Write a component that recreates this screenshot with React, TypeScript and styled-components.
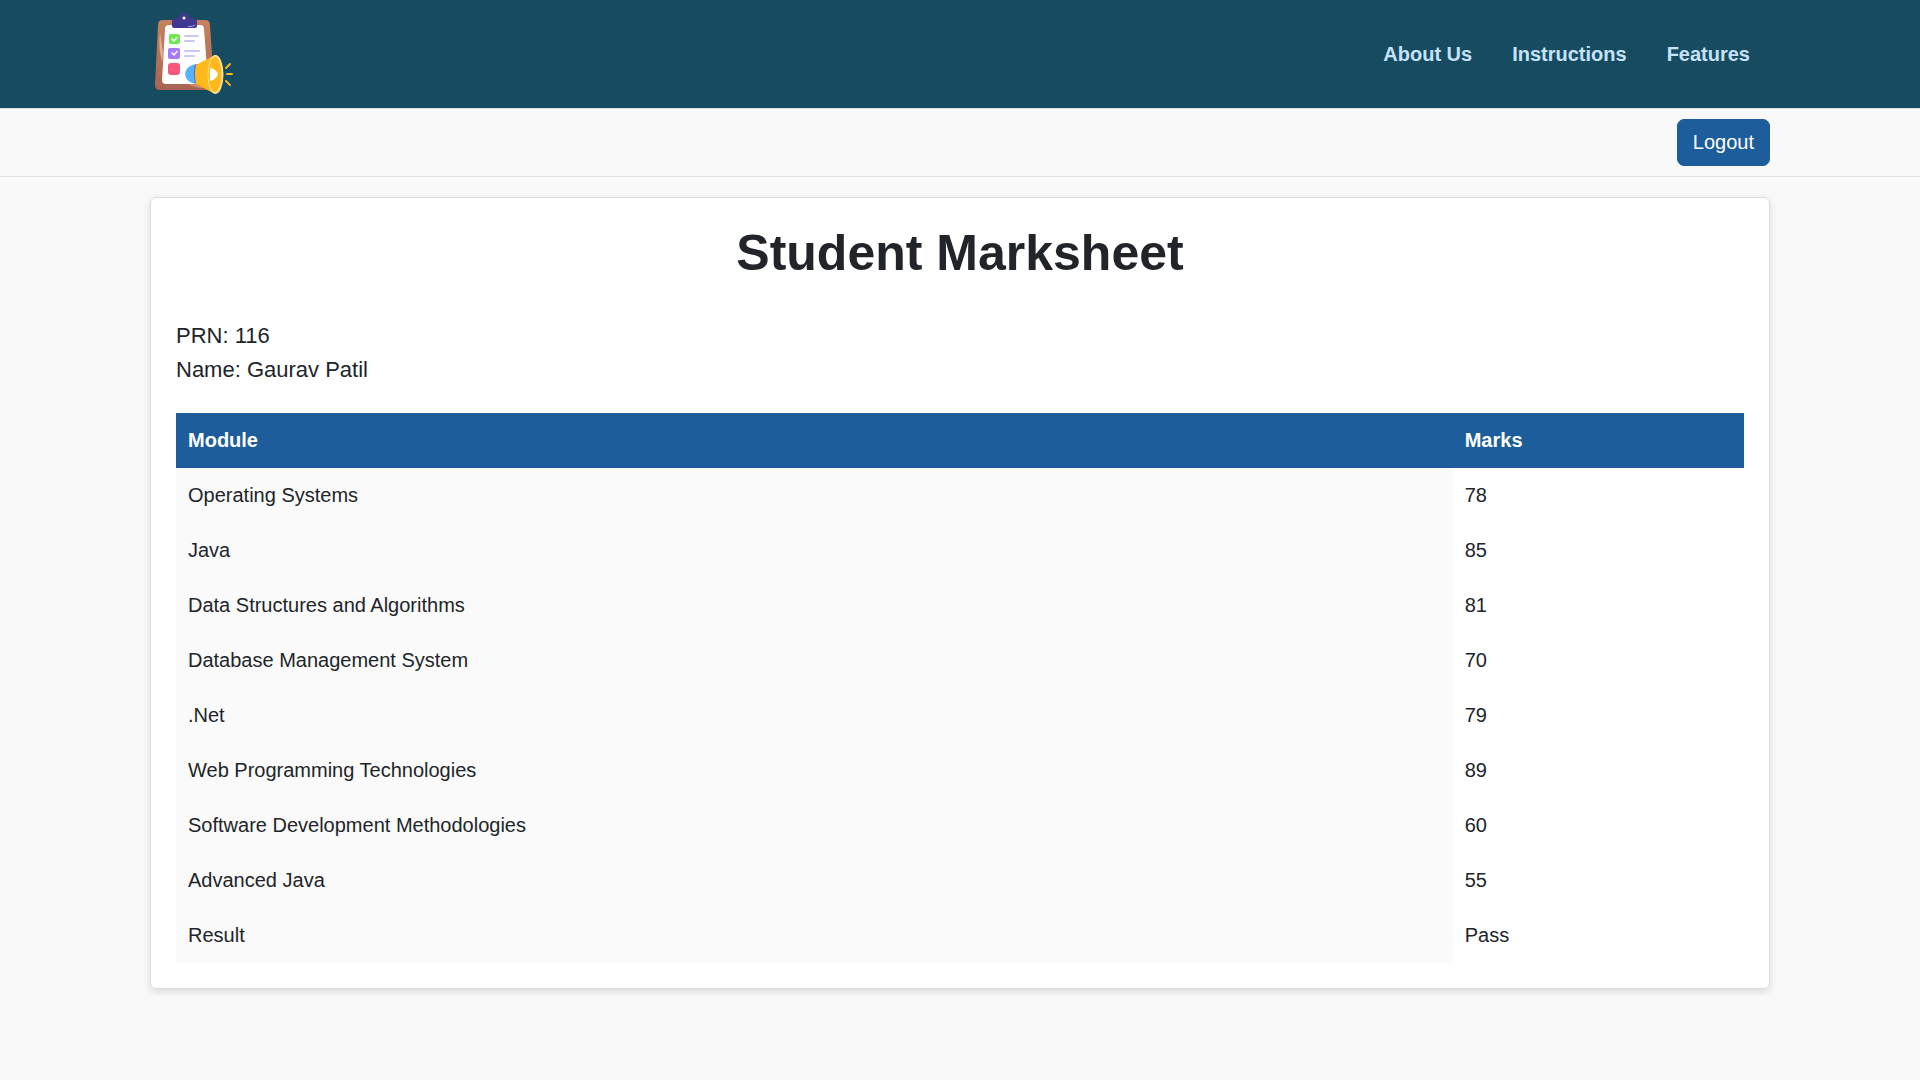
import React from 'react';
import styled, { createGlobalStyle } from 'styled-components';

const GlobalStyle = createGlobalStyle`
  *, *::before, *::after { box-sizing: border-box; }
  body {
    margin: 0;
    background: #f9f9f9;
    color: #212529;
    font-family: Arial, "Liberation Sans", sans-serif;
    font-size: 20px;
    line-height: 30px;
  }
`;

const Container = styled.div`
  width: 100%;
  max-width: 1650px;
  margin: 0 auto;
  padding: 0 15px;
`;

const Header = styled.header`
  background: #164b60;
`;

const HeaderRow = styled(Container)`
  display: flex;
  align-items: center;
  justify-content: space-between;
`;

const Brand = styled.a`
  display: block;
  padding: 10px 0;

  svg { display: block; }
`;

const Nav = styled.nav`
  display: flex;
`;

const NavLink = styled.a`
  padding: 10px 20px;
  color: #c5e3fb;
  font-weight: 700;
  text-decoration: none;
`;

const ActionBar = styled.div`
  border-top: 1px solid #dee2e6;
  border-bottom: 1px solid #dee2e6;
`;

const ActionRow = styled(Container)`
  display: flex;
  justify-content: flex-end;
  padding-top: 10px;
  padding-bottom: 10px;
`;

const Button = styled.button`
  padding: 8px 15px;
  border: 1px solid #1d5d9b;
  border-radius: 7px;
  background: #1d5d9b;
  color: #fff;
  font: inherit;
  line-height: 29px;
  cursor: pointer;
`;

const Main = styled(Container).attrs({ as: 'main' })`
  padding-top: 20px;
  padding-bottom: 20px;
`;

const Card = styled.section`
  padding: 25px;
  border: 1px solid #ddd;
  border-radius: 6px;
  background: #fff;
  box-shadow: 0 3px 8px rgba(0, 0, 0, 0.12);
`;

const Title = styled.h1`
  margin: 0 0 36px;
  font-size: 50px;
  line-height: 60px;
  text-align: center;
`;

const StudentInfo = styled.div`
  margin-bottom: 26px;
  font-size: 22px;
  line-height: 34px;

  p { margin: 0; }
`;

const Table = styled.table`
  width: 100%;
  border-collapse: collapse;
`;

const HeadCell = styled.th`
  padding: 12px 13px 12px 12px;
  background: #1d5d9b;
  color: #fff;
  line-height: 31px;
  text-align: left;
`;

const Cell = styled.td<{ $shaded?: boolean }>`
  padding: 12px 13px 12px 12px;
  background: ${(p) => (p.$shaded ? '#fafafa' : '#fff')};
  line-height: 31px;
`;

const marks: [string, string][] = [
  ['Operating Systems', '78'],
  ['Java', '85'],
  ['Data Structures and Algorithms', '81'],
  ['Database Management System', '70'],
  ['.Net', '79'],
  ['Web Programming Technologies', '89'],
  ['Software Development Methodologies', '60'],
  ['Advanced Java', '55'],
  ['Result', 'Pass'],
];

function Logo() {
  return (
    <svg width="88" height="88" viewBox="0 0 88 88" aria-hidden="true">
      <defs>
        <linearGradient id="board" x1="0" y1="0" x2="0" y2="1">
          <stop offset="0" stopColor="#c5825c" />
          <stop offset="1" stopColor="#a96352" />
        </linearGradient>
      </defs>
      <path d="M13 10H55Q60 10 60 15L64 75Q64 80 59 80H10Q5 80 5 75L8 15Q8 10 13 10Z" fill="url(#board)" />
      <path d="M10 22Q11 30 13 42L12 52Q8 36 10 22Z" fill="#e0b08e" />
      <path d="M38 74H58L60 77Q48 80 38 74Z" fill="#c98b6b" />
      <path d="M19 15H50Q54 15 54 19L58 70Q58 74 54 74H16Q12 74 12 70L15 19Q15 15 19 15Z" fill="#fff" />
      <path d="M24 9Q29 9 29 6Q32 3 34 3Q37 3 40 6Q40 9 45 9Q47 9 47 11V16Q47 18 45 18H24Q22 18 22 16V11Q22 9 24 9Z" fill="#3f3790" />
      <circle cx="34" cy="8" r="1.5" fill="#fff" />
      <path d="M38 16.5Q43 17 45 15" stroke="#d9d6f5" strokeWidth="0.7" fill="none" />
      <rect x="19" y="24" width="11" height="10" rx="2" fill="#70e650" />
      <rect x="18" y="38" width="12" height="11" rx="2" fill="#a77bf8" />
      <rect x="18" y="53" width="12" height="12" rx="3" fill="#f9577a" />
      <path d="M22 29L24 31L27 27.5M22 43L24 45L27 41.5" fill="none" stroke="#fff" strokeWidth="1.5" strokeLinecap="round" />
      <path d="M35 26H48M35 31H44M35 41H49M35 46H44" stroke="#c9c8f2" strokeWidth="2" strokeLinecap="round" />
      <path d="M47 54Q36 55 35 64Q36 73 47 74Z" fill="#56b4fb" />
      <path d="M44.500 55L48 54V74L44.500 73Q43 64 44.500 55Z" fill="#5a6fe0" />
      <path d="M46 55L65 45V84L46 74Q44 64 46 55Z" fill="#ffb91d" />
      <ellipse cx="65.5" cy="64.5" rx="8" ry="19.5" fill="#ffdf8c" />
      <ellipse cx="65" cy="64.5" rx="6.5" ry="17.5" fill="#ffb91d" />
      <path d="M60 58Q66 59 68 64Q66 70 60 71Z" fill="#fff" />
      <path d="M76 58L80 54M77 64H82M76 71L80 75" stroke="#f5b52a" strokeWidth="2" strokeLinecap="round" />
    </svg>
  );
}

export default function App() {
  return (
    <>
      <GlobalStyle />
      <Header>
        <HeaderRow>
          <Brand href="#" aria-label="Home">
            <Logo />
          </Brand>
          <Nav>
            <NavLink href="#about">About Us</NavLink>
            <NavLink href="#instructions">Instructions</NavLink>
            <NavLink href="#features">Features</NavLink>
          </Nav>
        </HeaderRow>
      </Header>
      <ActionBar>
        <ActionRow>
          <Button type="button">Logout</Button>
        </ActionRow>
      </ActionBar>
      <Main>
        <Card>
          <Title>Student Marksheet</Title>
          <StudentInfo>
            <p>PRN: 116</p>
            <p>Name: Gaurav Patil</p>
          </StudentInfo>
          <Table>
            <thead>
              <tr>
                <HeadCell scope="col">Module</HeadCell>
                <HeadCell scope="col">Marks</HeadCell>
              </tr>
            </thead>
            <tbody>
              {marks.map(([module, mark]) => (
                <tr key={module}>
                  <Cell $shaded>{module}</Cell>
                  <Cell>{mark}</Cell>
                </tr>
              ))}
            </tbody>
          </Table>
        </Card>
      </Main>
    </>
  );
}
